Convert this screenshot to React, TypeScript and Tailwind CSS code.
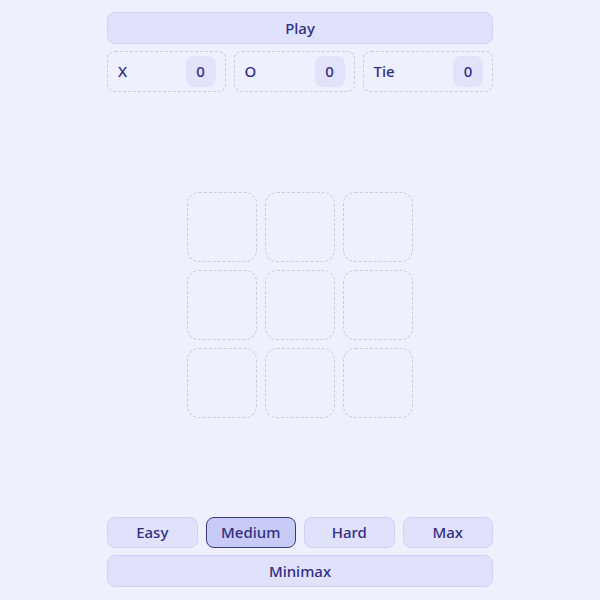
import { useState } from "react"

const levels = ["Easy", "Medium", "Hard", "Max"]

function ScoreCard({ label, value }: { label: string; value: number }) {
  return (
    <div className="flex flex-auto items-center justify-between gap-6 rounded-lg border border-dashed border-[#c9cadf] pl-[10px] pr-[9px] h-[41px]">
      <span>{label}</span>
      <span className="flex h-[31px] w-[30px] items-center justify-center rounded-lg bg-[#e2e3fa]">{value}</span>
    </div>
  )
}

function App() {
  const [level, setLevel] = useState("Medium")
  const [board] = useState<string[]>(Array(9).fill(""))

  return (
    <div
      className="flex h-screen w-full justify-center bg-[#eef0fd] text-[15px] font-medium text-[#312e81]"
      style={{ fontFamily: '"Noto Sans", "Open Sans", sans-serif' }}
    >
      <div className="flex w-[386px] flex-col pt-3 pb-[13px]">
        <button className="h-8 w-full rounded-lg border border-[#cfd0f6] bg-[#e0e1fb]">Play</button>

        <div className="mt-[7px] flex gap-2">
          <ScoreCard label="X" value={0} />
          <ScoreCard label="O" value={0} />
          <ScoreCard label="Tie" value={0} />
        </div>

        <div className="flex flex-1 items-center justify-center">
          <div className="grid grid-cols-3 gap-2">
            {board.map((c, i) => (
              <div key={i} className="size-[70px] rounded-xl border border-dashed border-[#c9cadf]">
                {c}
              </div>
            ))}
          </div>
        </div>

        <div className="flex gap-2">
          {levels.map((l) => (
            <button
              key={l}
              onClick={() => setLevel(l)}
              className={
                l === level
                  ? "h-[31px] flex-1 rounded-lg border border-[#3b3a78] bg-[#c9cbf7]"
                  : "h-[31px] flex-1 rounded-lg border border-[#cfd0f6] bg-[#e0e1fb]"
              }
            >
              {l}
            </button>
          ))}
        </div>
        <button className="mt-[7px] h-8 w-full rounded-lg border border-[#cfd0f6] bg-[#e0e1fb]">Minimax</button>
      </div>
    </div>
  )
}

export default App
